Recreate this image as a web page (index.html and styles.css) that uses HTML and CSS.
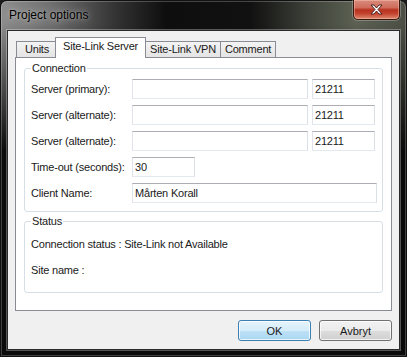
FILE: index.html
```html
<!DOCTYPE html>
<html>

<head>
  <meta charset="UTF-8">
  <title>Project options</title>
  <link rel="stylesheet" href="styles.css">
</head>

<body>
  <div class="window">
    <div class="titlebar">
      <span class="title">Project options</span>
      <div class="close">
        <svg width="13" height="11" viewBox="0 0 13 11">
          <path d="M1 1h3l2.5 3L9 1h3L8 5.5 12 10H9L6.5 7 4 10H1l4-4.5z" fill="#fff" stroke="#4a2520" stroke-width="1" stroke-linejoin="round" />
        </svg>
      </div>
    </div>
    <div class="client">
      <div class="tabs">
        <div class="tab">Units</div>
        <div class="tab active">Site-Link Server</div>
        <div class="tab">Site-Link VPN</div>
        <div class="tab">Comment</div>
      </div>
      <div class="panel">
        <fieldset class="group">
          <legend>Connection</legend>
          <div class="rows">
            <div class="row">
              <label>Server (primary):</label>
              <input class="host" type="text" />
              <input class="port" type="text" value="21211" />
            </div>
            <div class="row">
              <label>Server (alternate):</label>
              <input class="host" type="text" />
              <input class="port" type="text" value="21211" />
            </div>
            <div class="row">
              <label>Server (alternate):</label>
              <input class="host" type="text" />
              <input class="port" type="text" value="21211" />
            </div>
            <div class="row">
              <label>Time-out (seconds):</label>
              <input class="short" type="text" value="30" />
            </div>
            <div class="row">
              <label>Client Name:</label>
              <input class="wide" type="text" value="Mårten Korall" />
            </div>
          </div>
        </fieldset>
        <fieldset class="group status">
          <legend>Status</legend>
          <p>Connection status : Site-Link not Available</p>
          <p>Site name :</p>
        </fieldset>
      </div>
      <div class="buttons">
        <button class="default">OK</button>
        <button>Avbryt</button>
      </div>
    </div>
  </div>
</body>

</html>
```

FILE: styles.css
```css
* {
  box-sizing: border-box;
}

body {
  margin: 0;
  background: #1c1c1c;
  font-family: "Liberation Sans", Arial, sans-serif;
  font-size: 11px;
  letter-spacing: -0.2px;
  color: #1a1a1a;
}

.window {
  width: 407px;
  height: 357px;
  display: flex;
  flex-direction: column;
  padding: 0 6px 6px;
  border: 1px solid #111;
  border-radius: 7px 7px 0 0;
  box-shadow: inset 0 0 0 1px rgba(255, 255, 255, .22);
  background:
    linear-gradient(180deg, rgba(10, 10, 10, 0) 22px, #0b0b0b 150px),
    linear-gradient(90deg, #8d8d8d 0, #707070 50px, #333 115px, #0e0e0e 165px, #111 250px, #3c4038 305px, #5c6153 355px, #4a4e44 407px);
}

.titlebar {
  height: 29px;
  display: flex;
  align-items: flex-start;
}

.title {
  margin: 6px 0 0 2px;
  font-size: 12px;
  line-height: 16px;
  letter-spacing: 0;
  color: #000;
  text-shadow: 0 0 8px rgba(255, 255, 255, .55), 0 0 3px rgba(255, 255, 255, .35);
}

.close {
  margin: -1px 0 0 auto;
  width: 47px;
  height: 20px;
  display: flex;
  justify-content: center;
  align-items: center;
  border: 1px solid #3b1710;
  border-top: none;
  border-radius: 0 0 5px 5px;
  box-shadow: inset 0 0 0 1px rgba(255, 200, 180, .45), 0 0 0 1px rgba(255, 255, 255, .25);
  background: linear-gradient(180deg, #d98c7e 0, #cf6c5b 40%, #b8321f 52%, #c2402b 70%, #dd8a70 100%);
}

.client {
  flex: 1;
  display: flex;
  flex-direction: column;
  padding: 6px 7px 8px;
  background: #f0f0f0;
  border: 1px solid #2b2b2b;
  box-shadow: 0 0 0 1px rgba(255, 255, 255, .3);
}

.tabs {
  height: 20px;
  display: flex;
  align-items: flex-end;
  padding-left: 1px;
}

.tab {
  min-width: 42px;
  height: 16px;
  padding: 0 4px;
  line-height: 15px;
  text-align: center;
  border: 1px solid #898c95;
  border-bottom: none;
  margin-right: -1px;
  background: linear-gradient(180deg, #f3f3f3, #e4e4e4);
}

.tab.active {
  position: relative;
  z-index: 1;
  height: 21px;
  margin: 0 -1px -1px -2px;
  padding: 0 7px 2px;
  line-height: 17px;
  background: #fff;
}

.panel {
  flex: 1;
  padding: 4px 8px 0;
  background: #fff;
  border: 1px solid #898c95;
}

.group {
  margin: 0;
  padding: 5px 5px 8px 6px;
  border: 1px solid #d5dfe5;
  border-radius: 3px;
}

.group>legend {
  padding: 0 1px;
  line-height: 12px;
}

.rows {
  display: flex;
  flex-direction: column;
  gap: 6px;
}

.row {
  display: flex;
  align-items: center;
  height: 20px;
}

.row>label {
  width: 101px;
  flex: none;
}

input {
  height: 20px;
  margin: 0;
  padding: 0 2px;
  font: inherit;
  letter-spacing: inherit;
  color: inherit;
  border: 1px solid;
  border-color: #abadb3 #dbdfe6 #e3e9ef #e2e3ea;
  background: #fff;
  outline: none;
}

.host {
  width: 176px;
}

.port {
  width: 63px;
  margin-left: 4px;
}

.short {
  width: 63px;
}

.wide {
  width: 245px;
}

.status {
  margin-top: 3px;
  padding: 10px 6px 15px;
}

.status>p {
  margin: 0;
  line-height: 14px;
}

.status>p+p {
  margin-top: 12px;
}

.buttons {
  margin-top: 9px;
  display: flex;
  justify-content: flex-end;
  gap: 8px;
}

button {
  width: 73px;
  height: 21px;
  padding: 0;
  font: inherit;
  letter-spacing: 0;
  color: inherit;
  border: 1px solid #707070;
  border-radius: 3px;
  box-shadow: inset 0 0 0 1px rgba(255, 255, 255, .75);
  background: linear-gradient(180deg, #f2f2f2 0, #ebebeb 50%, #dddddd 51%, #cfcfcf 100%);
}

button.default {
  border-color: #3c7fb1;
  background: linear-gradient(180deg, #e5f4fc 0, #d5ecf9 50%, #bfe2f6 51%, #a9d6f2 100%);
}
```
